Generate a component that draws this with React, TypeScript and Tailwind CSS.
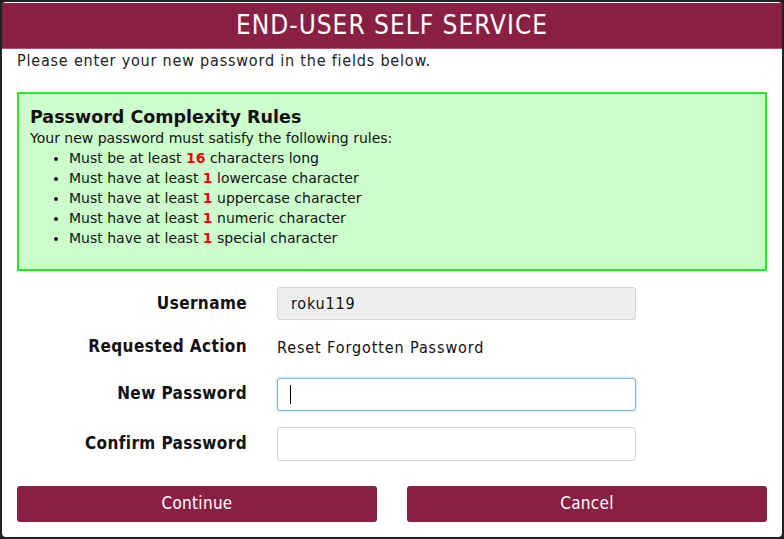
const rules: [string, string, string][] = [
  ['Must be at least ', '16', ' characters long'],
  ['Must have at least ', '1', ' lowercase character'],
  ['Must have at least ', '1', ' uppercase character'],
  ['Must have at least ', '1', ' numeric character'],
  ['Must have at least ', '1', ' special character'],
];

const tahoma = { fontFamily: '"DejaVu Sans Condensed", "Liberation Sans", sans-serif' };

export default function App() {
  return (
    <div className="w-[784px] h-[539px] bg-[#222222] p-[2px]" style={tahoma}>
      <div className="h-full bg-white rounded-[4px] overflow-hidden flex flex-col">
        <div className="h-[46px] bg-[#891f42] border-b border-[#a85a75] flex items-center justify-center text-white text-[26px] tracking-[1px] mt-[1px]">
          END-USER SELF SERVICE
        </div>
        <div className="px-[15px]">
          <p className="text-[16px] tracking-[0.8px] text-[#222] mt-[1px] leading-[22px]">Please enter your new password in the fields below.</p>

          <div
            className="mt-[20px] h-[179px] border-2 border-[#22ee22] bg-[#ccffcc] px-[11px] pt-[12px] text-[#111]"
            style={{ fontFamily: '"DejaVu Sans", Verdana, sans-serif' }}
          >
            <h2 className="text-[17.5px] font-bold leading-[22px]">Password Complexity Rules</h2>
            <p className="text-[14px] leading-[20px]">Your new password must satisfy the following rules:</p>
            <ul className="list-disc pl-[39px] text-[14px] leading-[20px]">
              {rules.map(([a, n, b], i) => (
                <li key={i}>
                  {a}
                  <span className="font-bold text-[#ee0000]">{n}</span>
                  {b}
                </li>
              ))}
            </ul>
          </div>

          <div className="mt-[16px] grid grid-cols-[230px_359px] gap-x-[30px] items-center text-[#111]">
            <label className="text-right font-bold text-[17px] tracking-[0.4px]">Username</label>
            <div className="h-[33px] rounded-[3px] border border-[#d4d4d4] bg-[#eeeeee] px-[13px] flex items-center text-[16px] tracking-[0.8px]">roku119</div>

            <label className="text-right font-bold text-[17px] tracking-[0.4px] mt-[14px] mb-[18px]">Requested Action</label>
            <div className="text-[16px] tracking-[0.9px] -mt-[2px]">Reset Forgotten Password</div>

            <label className="text-right font-bold text-[17px] tracking-[0.4px]">New Password</label>
            <div className="h-[33px] rounded-[3px] border border-[#7fb4e8] shadow-[0_0_3px_#a9cff2] bg-white px-[12px] flex items-center">
              <div className="w-[1px] h-[19px] bg-black" />
            </div>

            <label className="text-right font-bold text-[17px] tracking-[0.4px] mt-[16px]">Confirm Password</label>
            <div className="h-[34px] mt-[16px] rounded-[3px] border border-[#d4d4d4] bg-white" />
          </div>

          <div className="mt-[25px] grid grid-cols-2 gap-x-[30px]">
            <button className="h-[36px] rounded-[3px] bg-[#891f42] text-white text-[17px] tracking-[0.3px]">Continue</button>
            <button className="h-[36px] rounded-[3px] bg-[#891f42] text-white text-[17px] tracking-[0.3px]">Cancel</button>
          </div>
        </div>
      </div>
    </div>
  );
}
